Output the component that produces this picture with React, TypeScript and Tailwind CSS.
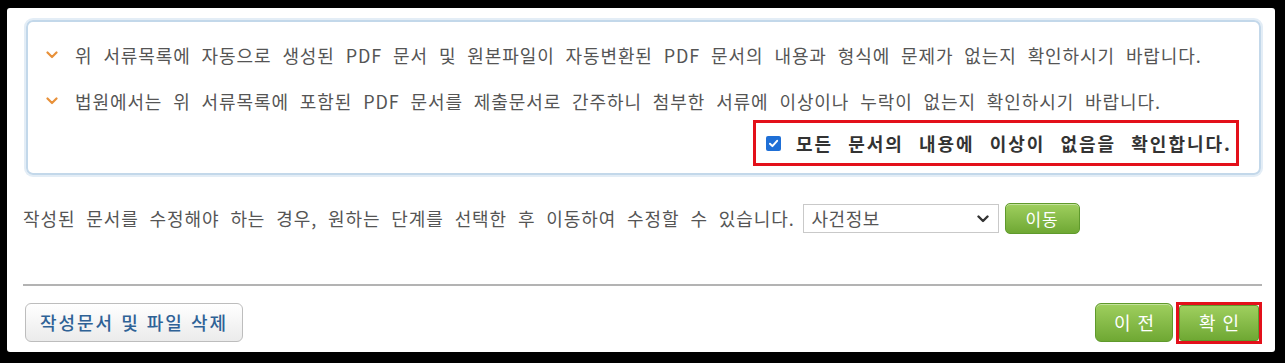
import React from "react";

const Chevron = () => (
  <svg width="12" height="8" viewBox="0 0 12 8" className="shrink-0">
    <polyline points="1.5,1.5 6,6 10.5,1.5" fill="none" stroke="#e8913a" strokeWidth="2.2" strokeLinecap="round" strokeLinejoin="round" />
  </svg>
);

export default function App() {
  return (
    <div className="w-[1285px] h-[363px] bg-black pt-[8px] pl-[7px] pr-[10px] pb-[11px] font-['Noto_Sans_CJK_KR',sans-serif]">
      <div className="h-[344px] bg-white rounded-[3px] pl-[16px] pr-[13px] pt-[12px] flex flex-col">
        {/* notice box */}
        <div className="ml-[3px] mr-[1px] h-[155px] border-2 border-[#c3d8ea] rounded-[7px] shadow-[0_0_0_2px_#e3edf6] pt-[21px] pb-[7px] pr-[20px] flex flex-col">
          <div className="h-[24px] flex items-center pl-[18px] gap-[17px] text-[18px] text-[#555] tracking-[0.9px] [word-spacing:6px] whitespace-nowrap">
            <Chevron />
            <span>위 서류목록에 자동으로 생성된 PDF 문서 및 원본파일이 자동변환된 PDF 문서의 내용과 형식에 문제가 없는지 확인하시기 바랍니다.</span>
          </div>
          <div className="mt-[22px] h-[24px] flex items-center pl-[18px] gap-[17px] text-[18px] text-[#555] tracking-[0.9px] [word-spacing:6px] whitespace-nowrap">
            <Chevron />
            <span>법원에서는 위 서류목록에 포함된 PDF 문서를 제출문서로 간주하니 첨부한 서류에 이상이나 누락이 없는지 확인하시기 바랍니다.</span>
          </div>
          <div className="mt-[7px] self-end w-[486px] h-[46px] border-[3px] border-[#e3101a] flex items-center pl-[10px] gap-[15px]">
            <span className="w-[15px] h-[15px] rounded-[2px] bg-[#1f6fd6] flex items-center justify-center shrink-0">
              <svg width="11" height="11" viewBox="0 0 10 10">
                <polyline points="1.8,5.2 4,7.4 8.3,2.6" fill="none" stroke="#fff" strokeWidth="1.8" strokeLinecap="round" strokeLinejoin="round" />
              </svg>
            </span>
            <span className="text-[18px] font-bold text-[#333] tracking-[2px] [word-spacing:9px] whitespace-nowrap">
              모든 문서의 내용에 이상이 없음을 확인합니다.
            </span>
          </div>
        </div>

        {/* move step row */}
        <div className="mt-[28px] h-[31px] flex items-center">
          <span className="text-[18px] text-[#555] tracking-[0.9px] [word-spacing:6px] whitespace-nowrap">
            작성된 문서를 수정해야 하는 경우, 원하는 단계를 선택한 후 이동하여 수정할 수 있습니다.
          </span>
          <div className="ml-[8px] w-[196px] h-[29px] border border-[#c9c9c9] bg-white flex items-center justify-between pl-[8px] pr-[9px]">
            <span className="text-[18px] text-[#555] tracking-[0.5px]">사건정보</span>
            <svg width="12" height="8" viewBox="0 0 12 8">
              <polyline points="1.5,1.5 6,6 10.5,1.5" fill="none" stroke="#333" strokeWidth="2.4" strokeLinecap="round" strokeLinejoin="round" />
            </svg>
          </div>
          <button className="ml-[6px] w-[75px] h-[31px] rounded-[5px] border border-[#5f9a2c] bg-linear-to-b from-[#9fcf5e] to-[#6fa833] text-white text-[17px] tracking-[1px] shadow-[inset_0_1px_0_rgba(255,255,255,0.4)]">
            이동
          </button>
        </div>

        <div className="mt-[50px] border-t-2 border-[#b3b3b3]" />

        {/* bottom buttons */}
        <div className="mt-[16px] h-[41px] flex items-center justify-between">
          <button className="ml-[2px] w-[218px] h-[39px] rounded-[6px] border border-[#bdbdbd] bg-linear-to-b from-white to-[#ebebeb] text-[18px] text-[#2f6296] font-medium tracking-[2px] [word-spacing:1px]">
            작성문서 및 파일 삭제
          </button>
          <div className="flex items-center gap-[3px]">
            <button className="w-[78px] h-[39px] rounded-[6px] border border-[#5f9a2c] bg-linear-to-b from-[#9fcf5e] to-[#6fa833] text-white text-[18px] tracking-[7px] pl-[7px] shadow-[inset_0_1px_0_rgba(255,255,255,0.4)]">
              이전
            </button>
            <div className="w-[86px] h-[42px] border-[3px] border-[#e3101a] flex">
              <button className="flex-1 rounded-[3px] border border-[#5f9a2c] bg-linear-to-b from-[#9fcf5e] to-[#6fa833] text-white text-[18px] tracking-[7px] pl-[7px]">
                확인
              </button>
            </div>
          </div>
        </div>
      </div>
    </div>
  );
}
